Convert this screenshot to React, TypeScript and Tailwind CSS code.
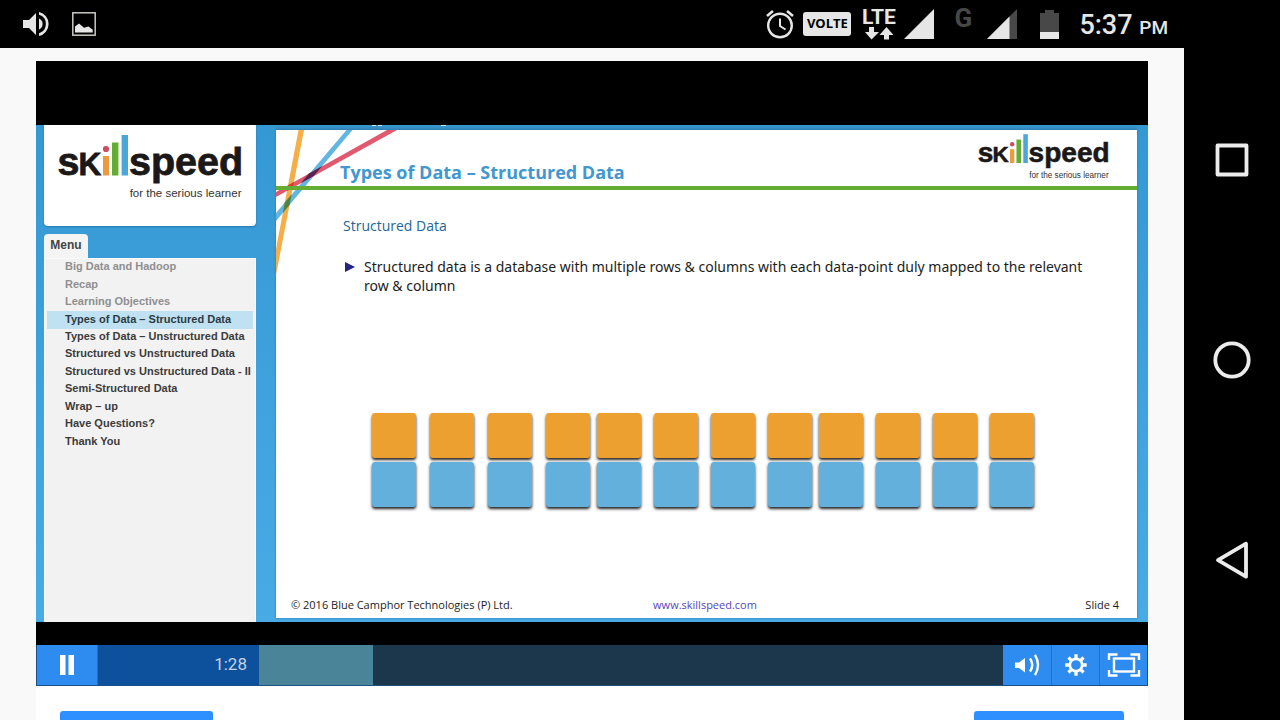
import React from 'react';

const menuItems = [
  { label: 'Big Data and Hadoop', state: 'seen' },
  { label: 'Recap', state: 'seen' },
  { label: 'Learning Objectives', state: 'seen' },
  { label: 'Types of Data – Structured Data', state: 'current' },
  { label: 'Types of Data – Unstructured Data', state: 'next' },
  { label: 'Structured vs Unstructured Data', state: 'next' },
  { label: 'Structured vs Unstructured Data - II', state: 'next' },
  { label: 'Semi-Structured Data', state: 'next' },
  { label: 'Wrap – up', state: 'next' },
  { label: 'Have Questions?', state: 'next' },
  { label: 'Thank You', state: 'next' },
];

const itemStyles: Record<string, string> = {
  seen: 'text-[#8f8f8f]',
  current: 'bg-[#bfe1f1] text-[#2c3a42]',
  next: 'text-[#3c3c3c]',
};

const columnGroups = ['gap-[14px]', 'gap-[13px]', 'gap-[13px]'];
const playback = { played: 161, buffered: 114, total: 905 };

function Logo({ className }: { className: string }) {
  return (
    <svg viewBox="0 0 184 64" className={className} role="img" aria-label="skillspeed, for the serious learner">
      <g fill="#1b1818" fontFamily="'Liberation Sans', sans-serif" fontWeight="700" stroke="#1b1818" strokeWidth="0.8">
        <text x="-0.5" y="39.500" fontSize="39.500">s</text>
        <text x="20.500" y="39.500" fontSize="31.500">K</text>
        <text x="71" y="39.500" fontSize="39.500">speed</text>
      </g>
      <circle cx="48" cy="14" r="3.1" fill="#cf4a63" />
      <rect x="45" y="21" width="6" height="19.5" fill="#eb9c3c" />
      <rect x="54" y="7.5" width="6.4" height="33" fill="#62ad32" />
      <rect x="63.600" y="0" width="6.4" height="40.5" fill="#4ba6da" />
      <text x="183.500" y="62" textAnchor="end" fontSize="11.500" fill="#333" fontFamily="'Liberation Sans', sans-serif">
        for the serious learner
      </text>
    </svg>
  );
}

function StatusBar() {
  return (
    <header className="flex h-12 shrink-0 items-center justify-between bg-black pr-4 pl-[23px] text-[#e6e6e6]">
      <div className="flex items-center gap-[23px]">
        <svg viewBox="0 0 26 24" className="h-6 w-[26px]" fill="currentColor" aria-label="Volume">
          <path d="M0 8h6L13 1v22l-7-7H0z" />
          <path d="M16 6.500a6 6 0 0 1 0 11z" />
          <path d="M16 0a12.300 12.300 0 0 1 0 24v-2.800a9.600 9.600 0 0 0 0-18.400z" />
        </svg>
        <svg viewBox="0 0 24 24" className="size-6" fill="none" aria-label="Picture">
          <rect x="0.8" y="0.800" width="22.400" height="22.400" stroke="#c9c9c2" strokeWidth="1.500" />
          <path d="M3 20.500v-6L7 11.500l5 4.300 4.500-1.400 4.200 3.300v2.800z" fill="currentColor" />
        </svg>
      </div>
      <div className="flex items-center">
        <svg viewBox="0 0 28 30" className="mr-[9px] h-[30px] w-7" fill="none" stroke="currentColor" aria-label="Alarm">
          <circle cx="14" cy="16.500" r="11.800" strokeWidth="2.400" />
          <path d="M14 9.500v7.500l5.500 3.500" strokeWidth="2" />
          <path d="M1 7l6-5M27 7l-6-5" strokeWidth="2.600" />
        </svg>
        <span className="mr-2.5 flex h-6 w-12 items-center justify-center rounded-[3px] bg-[#e6e6e6] font-['Open_Sans',sans-serif] text-[13px] font-bold text-black">
          VOLTE
        </span>
        <div className="mr-2 flex w-[35px] flex-col items-center">
          <span className="font-[Roboto,sans-serif] text-[21px] leading-4 font-bold">LTE</span>
          <svg viewBox="0 0 28 13" className="mt-0.5 h-[13px] w-7" fill="currentColor" aria-hidden="true">
            <path d="M4 0h5v5h5L6.500 12.500 0 5h4zM19 12.500h5V8h4.500L21.500 0 14.500 8H19z" />
          </svg>
        </div>
        <svg viewBox="0 0 30 30" className="mr-5 size-[30px]" aria-label="Signal, SIM 1">
          <path d="M0 30L30 0v30z" fill="currentColor" />
        </svg>
        <span className="mr-[15px] h-[30px] w-[18px] font-[Roboto,sans-serif] text-[26px] leading-[18px] font-bold text-[#484848]">G</span>
        <svg viewBox="0 0 30 30" className="mr-[23px] size-[30px]" aria-label="Signal, SIM 2">
          <path d="M0 30L30 0v30z" fill="#484848" />
          <path d="M0 30L22.500 7.500V30z" fill="currentColor" />
        </svg>
        <svg viewBox="0 0 19 29" className="mr-5 h-[29px] w-[19px]" aria-label="Battery">
          <path d="M0 3h5V0h9v3h5v26H0z" fill="#484848" />
          <path d="M0 22h19v7H0z" fill="currentColor" />
        </svg>
        <time className="pt-1 font-[Roboto,sans-serif] text-[27px] leading-8 font-medium">
          5:37 <span className="text-[19px]">PM</span>
        </time>
      </div>
    </header>
  );
}

function Sidebar() {
  return (
    <aside className="flex w-[212px] shrink-0 flex-col font-['Liberation_Sans',sans-serif]">
      <div className="mb-2 flex h-[101px] justify-center rounded-b bg-white pt-2.5 shadow-[0_1px_2px_#2676a8]">
        <Logo className="h-16 w-[184px]" />
      </div>
      <h2 className="flex h-6 w-11 items-center justify-center rounded-t bg-[#f4f4f4] pb-0.5 text-[12px] font-bold text-[#444]">Menu</h2>
      <nav className="flex-1 border-x border-t border-[#fafafa] bg-[#f2f2f2] px-0.5" aria-label="Slides">
        <ul className="grid h-48 auto-rows-fr">
          {menuItems.map((item) => (
            <li key={item.label} className="flex">
              <a
                href="#slide"
                className={'flex flex-1 items-center pb-0.5 pl-[18px] text-[11px] leading-[15px] font-bold whitespace-nowrap ' + itemStyles[item.state]}
              >
                {item.label}
              </a>
            </li>
          ))}
        </ul>
      </nav>
    </aside>
  );
}

function Slide() {
  return (
    <article className="relative flex h-[488px] flex-col bg-white font-['Open_Sans',sans-serif] shadow-[0_0_2px_#2676a8]">
      <svg viewBox="0 0 130 150" className="pointer-events-none absolute top-0 left-0 h-[150px] w-[130px]" aria-hidden="true">
        <path d="M22.500 0h5.500L0 145v-26z" fill="#f5ae48" />
        <path d="M70.500 0h6L0 91v-8z" fill="#62b6e2" />
        <path d="M111 0h10L0 67v-5z" fill="#e0596f" />
        <path d="M33 43.400L46.300 35.900 37.700 46.100 24.800 53.300z" fill="#55234f" />
        <path d="M8.800 72.400L15.600 64.300 13.500 74.900 6.800 82.900z" fill="#55823a" />
        <path d="M12.100 55.200L18 51.900 16.900 57.600 11 60.900z" fill="#d2402c" />
      </svg>
      <header className="relative flex h-[60px] justify-between border-b-4 border-[#62ad32] pr-7 pl-16">
        <h1 className="self-end pb-0.5 text-[18px] leading-6 font-bold text-[#4297cf]">Types of Data – Structured Data</h1>
        <Logo className="mt-1 h-[46px] w-[131px]" />
      </header>
      <div className="pt-[26px] pl-[67px]">
        <h2 className="text-[14px] leading-5 text-[#22659a]">Structured Data</h2>
        <ul className="mt-[21px]">
          <li className="flex font-['Noto_Sans',sans-serif] text-[14px] leading-[19px] text-[#1c1c1c]">
            <svg viewBox="0 0 10 10" className="mt-[5px] mr-[9px] ml-0.5 size-2.5 shrink-0" aria-hidden="true">
              <path d="M0 0l10 5-10 5z" fill="#26247c" />
            </svg>
            <p className="max-w-[736px]">
              Structured data is a database with multiple rows &amp; columns with each data-point duly mapped to the relevant row &amp; column
            </p>
          </li>
        </ul>
      </div>
      <div className="mt-[118px] flex gap-[7px] pl-24" role="img" aria-label="Table of two rows and twelve columns">
        {columnGroups.map((gap, group) => (
          <div key={group} className={'grid grid-cols-4 gap-y-1 ' + gap}>
            {Array.from({ length: 8 }, (_, i) => (
              <div
                key={i}
                className={
                  'h-[45px] w-11 rounded-[3px] shadow-[0_2px_3px_#222] ' + (i < 4 ? 'bg-[#eca02f]' : 'bg-[#63b0dd]')
                }
              />
            ))}
          </div>
        ))}
      </div>
      <footer className="mt-auto grid grid-cols-3 pr-[18px] pb-[5px] pl-[15px] text-[11px] leading-4 text-[#1c1c1c]">
        <span className="whitespace-nowrap">© 2016 Blue Camphor Technologies (P) Ltd.</span>
        <a href="#skillspeed" className="text-center text-[#5546bd]">www.skillspeed.com</a>
        <span className="text-right">Slide 4</span>
      </footer>
    </article>
  );
}

function Controls() {
  const button = 'flex items-center justify-center bg-[#2e8bef] text-white';
  return (
    <div className="flex h-[41px] border-x border-b border-[#1b4f86] bg-[#1c364b]">
      <button aria-label="Pause" className={button + ' w-[61px] border-r border-[#2470c8]'}>
        <svg viewBox="0 0 14 20" className="h-5 w-3.5" fill="currentColor">
          <path d="M0 0h5.500v20H0zM8.500 0H14v20H8.500z" />
        </svg>
      </button>
      <div className="flex flex-1">
        <div
          className="flex items-center justify-end bg-[#0d509b] pr-3 font-[Roboto,sans-serif] text-[17px] text-[#c3d4ea]"
          style={{ width: (playback.played / playback.total) * 100 + '%' }}
        >
          1:28
        </div>
        <div className="bg-[#4a8499]" style={{ width: (playback.buffered / playback.total) * 100 + '%' }} />
      </div>
      <button aria-label="Volume" className={button + ' w-12'}>
        <svg viewBox="0 0 26 22" className="h-[22px] w-[26px]" fill="none" stroke="currentColor">
          <path d="M1 8.500h4L11 4v14.500L5 14H1z" fill="currentColor" stroke="none" />
          <path d="M16 4.500q4.500 6.500 0 13M21 0.800q6 10.200 0 20.400" strokeWidth="2.400" />
        </svg>
      </button>
      <button aria-label="Settings" className={button + ' w-12 border-l border-[#2470c8]'}>
        <svg viewBox="0 0 22 22" className="size-[22px]" fill="none" stroke="currentColor">
          <circle cx="11" cy="11" r="6.200" strokeWidth="2.700" />
          <path
            d="M11 0.300v4M11 17.700v4M0.300 11h4M17.700 11h4M3.500 3.500l2.800 2.800M15.700 15.700l2.800 2.800M3.500 18.500l2.800-2.800M15.700 6.300l2.800-2.800"
            strokeWidth="3.300"
          />
        </svg>
      </button>
      <button aria-label="Full screen" className={button + ' w-12 border-l border-[#2470c8]'}>
        <svg viewBox="0 0 34 26" className="h-[26px] w-[34px]" fill="none" stroke="currentColor" strokeWidth="2.400">
          <path d="M2 8V2.500h8.500M23.500 2.500H32V8M32 18v5.500h-8.500M10.500 23.500H2V18" />
          <rect x="7" y="6.500" width="20" height="13" />
        </svg>
      </button>
    </div>
  );
}

export default function App() {
  return (
    <div className="flex h-screen overflow-hidden bg-black">
      <div className="flex min-w-0 flex-1 flex-col">
        <StatusBar />
        <main className="flex min-h-0 flex-1 flex-col bg-[#f9f9f9] px-9 pt-[13px]">
          <section className="shrink-0 bg-black pt-16" aria-label="Video player">
            <div className="mb-[23px] flex h-[497px] bg-linear-to-b from-[#3498d3] to-[#49abe4] pr-[11px] pl-2">
              <Sidebar />
              <div className="ml-5 min-w-0 flex-1">
                <div className="h-[5px] bg-linear-to-b from-[#3498d3] to-[#3786b8]">
                  <svg viewBox="0 0 180 5" className="h-[5px] w-[180px]" fill="none" stroke="#d6e9f4" aria-hidden="true">
                    <path d="M96 0.500h4M102 0.500h4M165 0.500h5" strokeWidth="1.200" />
                  </svg>
                </div>
                <Slide />
              </div>
            </div>
            <Controls />
          </section>
          <div className="flex flex-1 items-start justify-between bg-white px-6 pt-[25px]">
            <button aria-label="Previous" className="h-10 w-[153px] shrink-0 rounded-[3px] bg-[#2e90ff]" />
            <button aria-label="Next" className="h-10 w-[150px] shrink-0 rounded-[3px] bg-[#2e90ff]" />
          </div>
        </main>
      </div>
      <nav className="flex w-24 shrink-0 flex-col justify-center text-[#ececec]" aria-label="System">
        <button aria-label="Recent apps" className="flex h-[200px] items-center justify-center">
          <svg viewBox="0 0 38 38" className="size-[38px]" fill="none" stroke="currentColor" strokeWidth="3.800" strokeLinejoin="round">
            <rect x="4.500" y="4.500" width="29" height="29" />
          </svg>
        </button>
        <button aria-label="Home" className="flex h-[200px] items-center justify-center">
          <svg viewBox="0 0 38 38" className="size-[38px]" fill="none" stroke="currentColor" strokeWidth="3.800">
            <circle cx="19" cy="19" r="16.700" />
          </svg>
        </button>
        <button aria-label="Back" className="flex h-[200px] items-center justify-center">
          <svg viewBox="0 0 38 38" className="size-[38px]" fill="none" stroke="currentColor" strokeWidth="3.800" strokeLinejoin="round">
            <path d="M33 2.700v33L5 19.200z" />
          </svg>
        </button>
      </nav>
    </div>
  );
}
